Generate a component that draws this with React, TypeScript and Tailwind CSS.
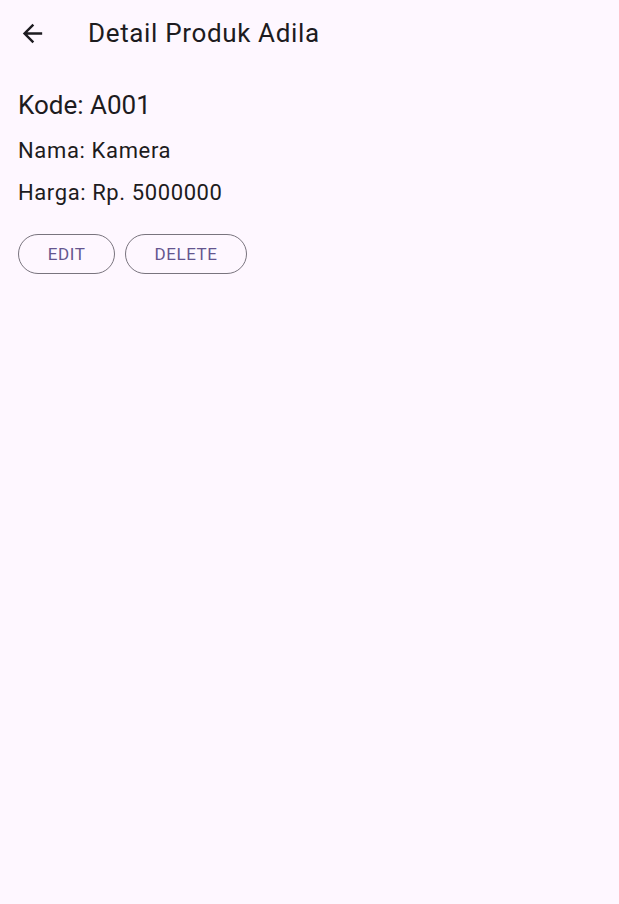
const App = () => {
  return (
    <div className="min-h-[904px] bg-[#fef7ff] text-[#1d1b20] font-['Roboto',sans-serif]">
      <div className="flex items-center h-[66px]">
        <button className="w-[88px] h-[66px] flex items-center pl-[18px]">
          <svg width="29" height="29" viewBox="0 0 24 24" fill="#1d1b20">
            <path d="M20 11H7.83l5.59-5.59L12 4l-8 8 8 8 1.41-1.41L7.83 13H20v-2z" />
          </svg>
        </button>
        <h1 className="text-[26px] leading-[32px] tracking-[0.65px]">Detail Produk Adila</h1>
      </div>
      <div className="px-[18px] pt-[23px]">
        <p className="text-[26px] leading-[32px]">Kode: A001</p>
        <p className="mt-[16px] text-[22px] leading-[28px] tracking-[0.65px]">Nama: Kamera</p>
        <p className="mt-[14px] text-[22px] leading-[28px] tracking-[0.6px]">Harga: Rp. 5000000</p>
        <div className="flex gap-[10px] mt-[27px]">
          <button className="h-[40px] w-[97px] pt-[2px] rounded-full border border-[#79747e] text-[#65558f] text-[17px] tracking-[0.6px]">
            EDIT
          </button>
          <button className="h-[40px] w-[122px] pt-[2px] rounded-full border border-[#79747e] text-[#65558f] text-[17px] tracking-[0.6px]">
            DELETE
          </button>
        </div>
      </div>
    </div>
  );
};

export default App;
